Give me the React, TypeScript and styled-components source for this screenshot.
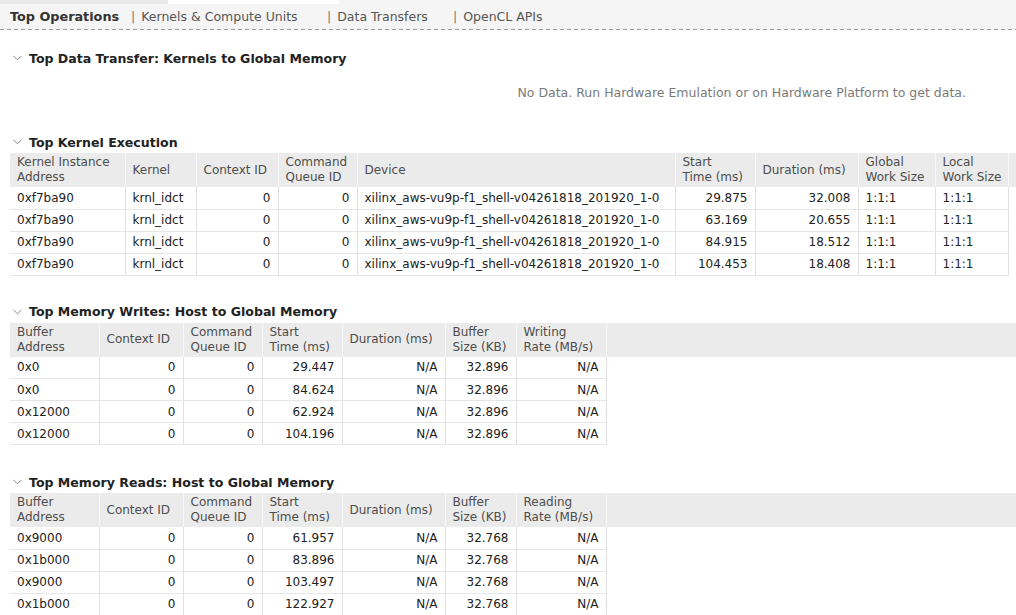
import React from "react";
import styled, { createGlobalStyle } from "styled-components";

const Global = createGlobalStyle`
  html, body { margin: 0; padding: 0; background: #ffffff; }
  body { font-family: "DejaVu Sans", "Liberation Sans", sans-serif; font-size: 12px; color: #222; }
`;

const Page = styled.div`
  width: 1016px;
  height: 615px;
  overflow: hidden;
  background: #fff;
`;

const TopStrip = styled.div`
  display: flex;
  height: 4px;
  background: #f5f5f5;
`;

const StripSeg = styled.div<{ $w: number; $c: string }>`
  width: ${(p) => p.$w}px;
  background: ${(p) => p.$c};
`;

const TabBar = styled.div`
  display: flex;
  align-items: center;
  height: 26px;
  padding-left: 10px;
  background-color: #f5f5f5;
  background-image: linear-gradient(to right, #9a9a9a 4px, transparent 4px);
  background-size: 7px 1px;
  background-repeat: repeat-x;
  background-position: left bottom;
  box-sizing: border-box;
  padding-bottom: 1px;
`;

const Tab = styled.div<{ $w?: number; $active?: boolean }>`
  display: flex;
  align-items: center;
  gap: 6px;
  flex: 0 0 auto;
  width: ${(p) => (p.$w ? `${p.$w}px` : "auto")};
  font-size: ${(p) => (p.$active ? "12.8px" : "12.5px")};
  font-weight: ${(p) => (p.$active ? 700 : 400)};
  color: ${(p) => (p.$active ? "#333" : "#555")};
  white-space: nowrap;
`;

const Sep = styled.span`
  color: #777;
  font-weight: 400;
`;

const Section = styled.section<{ $top: number }>`
  margin-top: ${(p) => p.$top}px;
`;

const Title = styled.div`
  display: flex;
  align-items: center;
  gap: 7px;
  height: 20px;
  box-sizing: border-box;
  padding: 0 0 2px 13px;
  font-size: 12.55px;
  font-weight: 700;
  color: #222;
  white-space: nowrap;
`;

const NoData = styled.div`
  padding: 16px 50px 32px 0;
  height: 16px;
  line-height: 16px;
  text-align: right;
  color: #7a7a7a;
  font-size: 12.5px;
`;

const Table = styled.table`
  margin-left: 10px;
  width: 1006px;
  border-collapse: collapse;
  table-layout: fixed;
  font-size: 12px;
`;

const HeadCell = styled.th`
  height: 34px;
  padding: 0 6px 0 7px;
  background: #ebebeb;
  color: #4d4d4d;
  font-weight: 400;
  text-align: left;
  line-height: 15px;
  vertical-align: middle;
  border-right: 1px solid #f7f7f7;
  box-sizing: border-box;
  overflow: hidden;
  &:last-child { border-right: none; }
`;

const Cell = styled.td<{ $right?: boolean }>`
  height: 22px;
  padding: 0 7px;
  text-align: ${(p) => (p.$right ? "right" : "left")};
  color: #222;
  white-space: nowrap;
  overflow: hidden;
  border-right: 1px solid #e0e0e0;
  border-bottom: 1px solid #e6e6e6;
  box-sizing: border-box;
`;

const Filler = styled.td`
  border: none;
`;

const Chevron = () => (
  <svg width="9" height="6" viewBox="0 0 9 6" fill="none">
    <polyline points="0.5,0.8 4.5,4.8 8.5,0.8" stroke="#8a8a8a" strokeWidth="1" />
  </svg>
);

type Col = { label: React.ReactNode; w: number; right?: boolean };

const DataTable = ({ cols, rows }: { cols: Col[]; rows: string[][] }) => (
  <Table>
    <colgroup>
      {cols.map((c, i) => (
        <col key={i} style={{ width: c.w }} />
      ))}
      <col />
    </colgroup>
    <thead>
      <tr>
        {cols.map((c, i) => (
          <HeadCell key={i}>{c.label}</HeadCell>
        ))}
        <HeadCell />
      </tr>
    </thead>
    <tbody>
      {rows.map((r, ri) => (
        <tr key={ri}>
          {r.map((v, ci) => (
            <Cell key={ci} $right={cols[ci].right}>
              {v}
            </Cell>
          ))}
          <Filler />
        </tr>
      ))}
    </tbody>
  </Table>
);

const two = (a: string, b: string) => (
  <>
    {a}
    <br />
    {b}
  </>
);

const kernelCols: Col[] = [
  { label: two("Kernel Instance", "Address"), w: 115 },
  { label: "Kernel", w: 71 },
  { label: "Context ID", w: 82, right: true },
  { label: two("Command", "Queue ID"), w: 79, right: true },
  { label: "Device", w: 318 },
  { label: two("Start", "Time (ms)"), w: 80, right: true },
  { label: "Duration (ms)", w: 103, right: true },
  { label: two("Global", "Work Size"), w: 77 },
  { label: two("Local", "Work Size"), w: 73 },
];

const dev = "xilinx_aws-vu9p-f1_shell-v04261818_201920_1-0";
const kernelRows = [
  ["0xf7ba90", "krnl_idct", "0", "0", dev, "29.875", "32.008", "1:1:1", "1:1:1"],
  ["0xf7ba90", "krnl_idct", "0", "0", dev, "63.169", "20.655", "1:1:1", "1:1:1"],
  ["0xf7ba90", "krnl_idct", "0", "0", dev, "84.915", "18.512", "1:1:1", "1:1:1"],
  ["0xf7ba90", "krnl_idct", "0", "0", dev, "104.453", "18.408", "1:1:1", "1:1:1"],
];

const memCols = (rate: string): Col[] => [
  { label: two("Buffer", "Address"), w: 89 },
  { label: "Context ID", w: 84, right: true },
  { label: two("Command", "Queue ID"), w: 79, right: true },
  { label: two("Start", "Time (ms)"), w: 80, right: true },
  { label: "Duration (ms)", w: 103, right: true },
  { label: two("Buffer", "Size (KB)"), w: 71, right: true },
  { label: two(rate, "Rate (MB/s)"), w: 90, right: true },
];

const writeRows = [
  ["0x0", "0", "0", "29.447", "N/A", "32.896", "N/A"],
  ["0x0", "0", "0", "84.624", "N/A", "32.896", "N/A"],
  ["0x12000", "0", "0", "62.924", "N/A", "32.896", "N/A"],
  ["0x12000", "0", "0", "104.196", "N/A", "32.896", "N/A"],
];

const readRows = [
  ["0x9000", "0", "0", "61.957", "N/A", "32.768", "N/A"],
  ["0x1b000", "0", "0", "83.896", "N/A", "32.768", "N/A"],
  ["0x9000", "0", "0", "103.497", "N/A", "32.768", "N/A"],
  ["0x1b000", "0", "0", "122.927", "N/A", "32.768", "N/A"],
];

export default function App() {
  return (
    <Page>
      <Global />
      <TopStrip>
        <StripSeg $w={168} $c="#e9e9e9" />
        <StripSeg $w={171} $c="#ffffff" />
      </TopStrip>
      <TabBar>
        <Tab $w={121} $active>
          Top Operations
        </Tab>
        <Tab $w={196}>
          <Sep>|</Sep>Kernels &amp; Compute Units
        </Tab>
        <Tab $w={126}>
          <Sep>|</Sep>Data Transfers
        </Tab>
        <Tab>
          <Sep>|</Sep>OpenCL APIs
        </Tab>
      </TabBar>

      <Section $top={19}>
        <Title>
          <Chevron />
          Top Data Transfer: Kernels to Global Memory
        </Title>
        <NoData>No Data. Run Hardware Emulation or on Hardware Platform to get data.</NoData>
      </Section>

      <Section $top={0}>
        <Title>
          <Chevron />
          Top Kernel Execution
        </Title>
        <DataTable cols={kernelCols} rows={kernelRows} />
      </Section>

      <Section $top={27}>
        <Title>
          <Chevron />
          Top Memory Writes: Host to Global Memory
        </Title>
        <DataTable cols={memCols("Writing")} rows={writeRows} />
      </Section>

      <Section $top={28}>
        <Title>
          <Chevron />
          Top Memory Reads: Host to Global Memory
        </Title>
        <DataTable cols={memCols("Reading")} rows={readRows} />
      </Section>
    </Page>
  );
}
